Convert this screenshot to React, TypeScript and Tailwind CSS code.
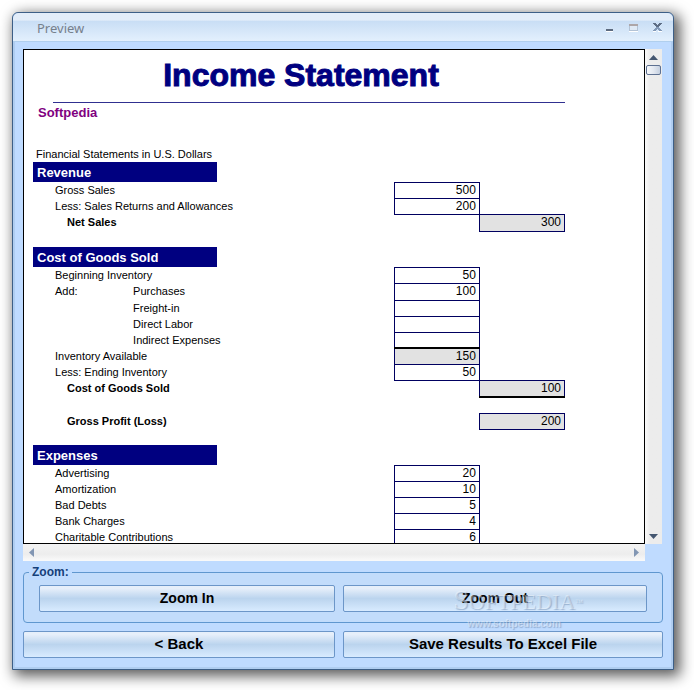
import React from 'react';

interface Row {
  kind?: 'section' | 'blank';
  label?: string;
  sub?: string;
  bold?: boolean;
  amount?: string;
  total?: string;
  box?: 'shaded' | 'total';
  tall?: boolean;
}

const ROWS: Row[] = [
  { kind: 'section', label: 'Revenue' },
  { label: 'Gross Sales', amount: '500' },
  { label: 'Less: Sales Returns and Allowances', amount: '200' },
  { label: 'Net Sales', bold: true, total: '300', tall: true },
  { kind: 'blank' },
  { kind: 'section', label: 'Cost of Goods Sold' },
  { label: 'Beginning Inventory', amount: '50' },
  { label: 'Add:', sub: 'Purchases', amount: '100', tall: true },
  { sub: 'Freight-in', amount: '' },
  { sub: 'Direct Labor', amount: '' },
  { sub: 'Indirect Expenses', amount: '' },
  { label: 'Inventory Available', amount: '150', box: 'shaded' },
  { label: 'Less: Ending Inventory', amount: '50' },
  { label: 'Cost of Goods Sold', bold: true, total: '100', box: 'total' },
  { kind: 'blank' },
  { label: 'Gross Profit (Loss)', bold: true, total: '200' },
  { kind: 'blank' },
  { kind: 'section', label: 'Expenses' },
  { label: 'Advertising', amount: '20' },
  { label: 'Amortization', amount: '10' },
  { label: 'Bad Debts', amount: '5' },
  { label: 'Bank Charges', amount: '4' },
  { label: 'Charitable Contributions', amount: '6' },
];

const SheetRow: React.FC<{ row: Row }> = ({ row }) => {
  if (row.kind === 'blank') {
    return (
      <tr className="h-4">
        <td colSpan={6} />
      </tr>
    );
  }
  if (row.kind === 'section') {
    return (
      <tr className="h-5">
        <th colSpan={3} className="bg-[#000080] p-0 pl-1 text-left text-[13px] leading-[19px] font-bold text-white">
          {row.label}
        </th>
        <td colSpan={3} className="p-0" />
      </tr>
    );
  }
  return (
    <tr className={row.tall ? 'h-[17px]' : 'h-4'}>
      <td className="p-0" />
      {row.sub ? (
        <>
          <td className="p-0">{row.label}</td>
          <td className="p-0">{row.sub}</td>
        </>
      ) : (
        <td colSpan={2} className={row.bold ? 'p-0 pl-3 font-bold' : 'p-0'}>
          {row.label}
        </td>
      )}
      <td className="p-0" />
      {row.amount === undefined ? (
        <td className="p-0" />
      ) : (
        <td
          className={
            row.box === 'shaded'
              ? 'border border-t-2 border-[#000060] border-t-black bg-[#e2e2e2] p-0 pr-[3px] text-right text-xs leading-[15px]'
              : 'border border-[#000060] p-0 pr-[3px] text-right text-xs leading-[15px]'
          }
        >
          {row.amount}
        </td>
      )}
      {row.total === undefined ? (
        <td className="p-0" />
      ) : (
        <td
          className={
            row.box === 'total'
              ? 'border border-b-2 border-[#000060] border-b-black bg-[#e2e2e2] p-0 pr-[3px] text-right text-xs leading-[15px]'
              : 'border border-[#000060] bg-[#e2e2e2] p-0 pr-[3px] text-right text-xs leading-[15px]'
          }
        >
          {row.total}
        </td>
      )}
    </tr>
  );
};

const TitleBar: React.FC = () => (
  <header className="flex h-[29px] shrink-0 items-center justify-between rounded-t-md border-b border-[#b0cfee] bg-linear-to-b from-[#e3edf9] from-25% via-[#c9def5] via-30% to-[#e3f0fd] pr-2 pl-6">
    <h1 className="pt-px font-['Noto_Sans',sans-serif] text-[13px] leading-5 text-[#76808c]">Preview</h1>
    <div className="flex gap-2">
      <button type="button" aria-label="Minimize" className="size-4">
        <svg viewBox="0 0 16 16" className="size-4" shapeRendering="crispEdges">
          <path d="M5 10h7v2H5z" fill="#5d6b80" />
          <path d="M5 12h7v1H5z" fill="#fff" />
        </svg>
      </button>
      <button type="button" aria-label="Maximize" className="size-4">
        <svg viewBox="0 0 16 16" className="size-4" shapeRendering="crispEdges">
          <path d="M4 5h9v7H4z" fill="#b3c3d6" />
          <path d="M5 7h7v4H5z" fill="#dfeaf6" />
          <path d="M4 5h9v2H4z" fill="#ada6a8" />
          <path d="M4 12h9v1H4z" fill="#fff" />
        </svg>
      </button>
      <button type="button" aria-label="Close" className="size-4">
        <svg viewBox="0 0 16 16" className="size-4" shapeRendering="crispEdges">
          <path d="M4 12h3v1H4zM9 12h4v1H9z" fill="#fff" />
          <path d="M4 4h3v1h1v1h1V5h1V4h3v1h-1v1h-1v1h-1v1H7V7H6V6H5V5H4z" fill="#5d6d85" />
          <path d="M7 8h3v1h1v1h1v1h1v1h-3v-1H9v-1H8v1H7v1H4v-1h1v-1h1V9h1z" fill="#8299b8" />
        </svg>
      </button>
    </div>
  </header>
);

const VerticalScroll: React.FC = () => (
  <div className="mr-px flex w-[17px] shrink-0 flex-col items-center justify-between bg-linear-to-r from-[#fafafa] to-[#ececec] to-30%">
    <div className="flex flex-col items-center">
      <button type="button" aria-label="Scroll up" className="h-4">
        <svg viewBox="0 0 9 5" className="h-[5px] w-[9px]">
          <path d="M4.500 0L9 5H0z" fill="#445670" />
        </svg>
      </button>
      <div className="h-[10px] w-[15px] rounded-xs border border-[#5d7091] bg-linear-to-r from-[#f6f8fb] via-[#e3e8f0] to-[#c5d0e0]" />
    </div>
    <button type="button" aria-label="Scroll down" className="h-4">
      <svg viewBox="0 0 9 5" className="h-[5px] w-[9px]">
        <path d="M0 0h9L4.500 5z" fill="#445670" />
      </svg>
    </button>
  </div>
);

const HorizontalScroll: React.FC = () => (
  <div className="mr-[18px] flex h-[17px] shrink-0 items-center justify-between bg-linear-to-b from-[#f3f3f3] via-[#ededed] via-60% to-[#fafafa] px-[6px]">
    <button type="button" aria-label="Scroll left">
      <svg viewBox="0 0 5 9" className="h-[9px] w-[5px]">
        <path d="M5 0v9L0 4.500z" fill="#8296b3" />
      </svg>
    </button>
    <button type="button" aria-label="Scroll right">
      <svg viewBox="0 0 5 9" className="h-[9px] w-[5px]">
        <path d="M0 0v9l5-4.500z" fill="#8296b3" />
      </svg>
    </button>
  </div>
);

const ActionButton: React.FC<{ small?: boolean; children: React.ReactNode }> = ({ small, children }) => (
  <button
    type="button"
    className={`h-[27px] min-w-0 rounded-xs border border-[#6c96c8] bg-linear-to-b from-[#e6effa] from-10% via-[#bbd4ee] via-50% to-[#d8ebff] pb-0.5 leading-5 font-bold text-black ${small ? 'text-sm' : 'text-[15px]'}`}
  >
    {children}
  </button>
);

export default function App() {
  return (
    <div className="flex h-screen bg-white pt-3 pr-5 pb-5 pl-3 font-['Liberation_Sans',Arial,sans-serif]">
      <main className="flex min-w-0 flex-1 flex-col rounded-t-md border border-[#3d5f87] bg-[#bfdbff] shadow-[4px_4px_14px_2px_rgba(0,0,0,0.65)]">
        <TitleBar />
        <div className="flex min-h-0 flex-1 flex-col border-2 border-t-0 border-[#afcdf0] px-2 pt-[7px] pb-[9px]">
          <div className="flex min-h-0 flex-1">
            <div className="min-w-0 flex-1 overflow-hidden border border-black bg-white pl-[9px]">
              <div className="w-[532px]">
                <h2 className="ml-5 border-b border-[#303090] pt-[5px] pr-4 pb-[7px] text-center text-[32px] leading-10 font-black text-[#000080] [-webkit-text-stroke:1px_#000080]">
                  Income Statement
                </h2>
                <p className="pl-[5px] text-[13px] leading-5 font-bold text-[#800080]">Softpedia</p>
                <p className="pt-[23px] pl-[3px] text-[11px] leading-4 text-black">Financial Statements in U.S. Dollars</p>
              </div>
              <table className="w-[532px] table-fixed border-collapse text-[11px] leading-[15px] whitespace-nowrap text-black">
                <colgroup>
                  <col className="w-[22px]" />
                  <col className="w-[78px]" />
                  <col className="w-[84px]" />
                  <col className="w-[177px]" />
                  <col className="w-[85px]" />
                  <col className="w-[85px]" />
                </colgroup>
                <tbody>
                  {ROWS.map((row, i) => (
                    <SheetRow key={i} row={row} />
                  ))}
                </tbody>
              </table>
            </div>
            <VerticalScroll />
          </div>
          <HorizontalScroll />

          <div className="relative mt-[3px] shrink-0">
            <fieldset className="rounded-sm border border-[#5f97cf] bg-[#c2dcfb] px-[15px] pb-[10px]">
              <legend className="-ml-[10px] bg-[#bfdbff] px-[3px] text-xs leading-4 font-bold text-[#15407a]">Zoom:</legend>
              <div className="grid grid-cols-[37fr_38fr] gap-2 pt-[5px]">
                <ActionButton small>Zoom In</ActionButton>
                <ActionButton small>Zoom Out</ActionButton>
              </div>
            </fieldset>
            <div className="mt-2 grid grid-cols-[39fr_40fr] gap-2">
              <ActionButton>&lt; Back</ActionButton>
              <ActionButton>Save Results To Excel File</ActionButton>
            </div>
            {/* Watermark */}
            <div className="pointer-events-none absolute top-[22px] right-20 flex flex-col items-center text-white/40 [text-shadow:1px_1px_1px_rgba(90,120,160,0.45)]">
              <span className="flex h-7 items-baseline font-['Liberation_Serif',serif] text-[22px] leading-7">
                <span className="text-[28px]">S</span>OFTPEDIA<sup className="text-[8px]">™</sup>
              </span>
              <span className="pr-2 font-['Liberation_Sans',sans-serif] text-[10px] leading-5 font-bold">www.softpedia.com</span>
            </div>
          </div>
        </div>
      </main>
    </div>
  );
}
